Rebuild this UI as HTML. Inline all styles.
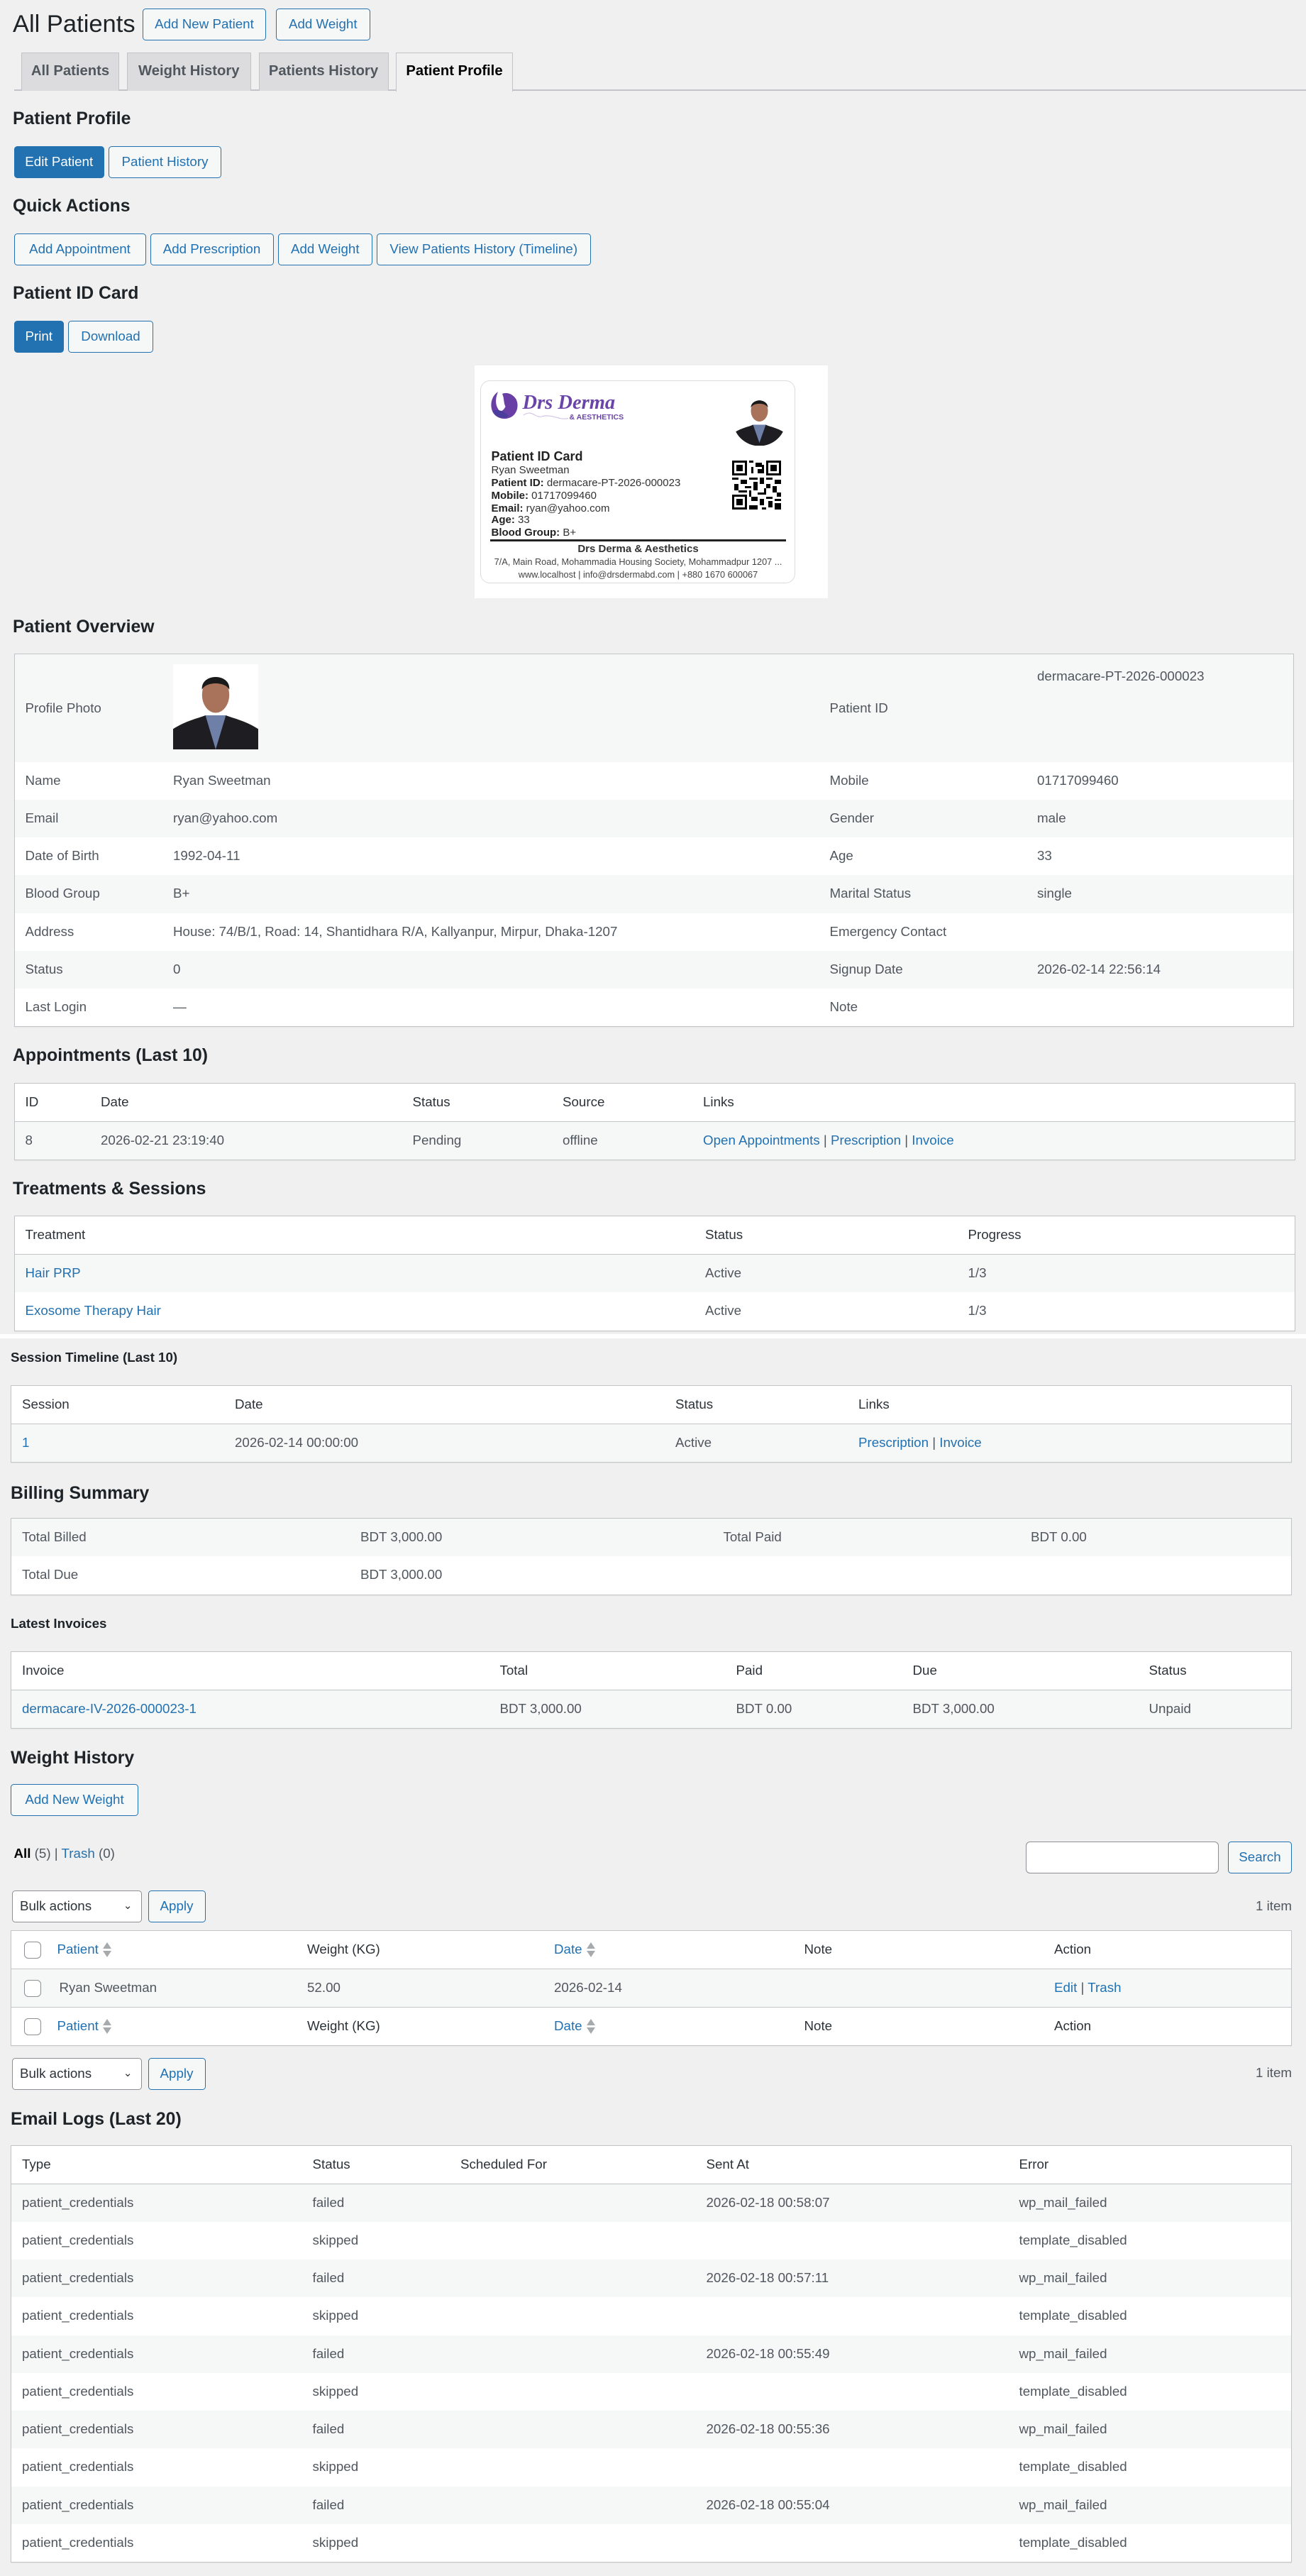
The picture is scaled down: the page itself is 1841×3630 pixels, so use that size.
<!DOCTYPE html>
<html><head><meta charset="utf-8">
<style>
*{box-sizing:border-box;margin:0;padding:0}
html,body{background:#f0f0f1}
body{zoom:1.5;width:1227px;height:2420px;overflow:hidden;font-family:"Liberation Sans",Arial,sans-serif;font-size:12.5px;color:#3c434a}
#w{position:relative;width:1227px;height:2420px}
.a{position:absolute}
h1{position:absolute;font-size:23px;font-weight:400;color:#1d2327;left:12px;top:8px;line-height:30px}
.h2{position:absolute;left:12px;font-size:16.5px;font-weight:600;color:#1d2327;line-height:20px}
.h4{position:absolute;left:10px;font-size:12.5px;font-weight:600;color:#1d2327;line-height:16px}
.btn{position:absolute;height:30px;line-height:28px;border:1px solid #2271b1;color:#2271b1;background:#f6f7f7;border-radius:3px;font-size:12.5px;text-align:center;white-space:nowrap}
.btn.p{background:#2271b1;color:#fff}
.tab{position:absolute;top:49px;height:36px;line-height:34px;background:#dcdcde;border:1px solid #c3c4c7;border-bottom:none;font-size:13.5px;font-weight:600;color:#50575e;text-align:center}
.tab.on{background:#f0f0f1;color:#000;height:37px}
.t{position:absolute;border:1px solid #c3c4c7;background:#fff;box-shadow:0 1px 1px rgba(0,0,0,.04)}
.r{position:relative;height:35.5px;color:#50575e}
.r.h{height:36px;border-bottom:1px solid #c3c4c7;color:#2c3338}
.r.s{background:#f6f7f7}
.r span{position:absolute;top:0;line-height:35px;white-space:nowrap}
.lk{color:#2271b1}
.cb{position:absolute;top:10px;width:16px;height:16px;border:1px solid #8c8f94;border-radius:4px;background:#fff}
.so{display:inline-block;vertical-align:middle;margin-left:4px;width:8px;height:16px;position:relative}
.so:before{content:"";position:absolute;left:0;top:1px;border-left:4px solid transparent;border-right:4px solid transparent;border-bottom:6px solid #a7aaad}
.so:after{content:"";position:absolute;left:0;top:9px;border-left:4px solid transparent;border-right:4px solid transparent;border-top:6px solid #a7aaad}
.sel{position:absolute;height:30px;border:1px solid #8c8f94;border-radius:3px;background:#fff;line-height:28px;padding-left:7px;color:#2c3338}
.card{position:absolute;left:451px;top:357px;width:296px;height:191px;border:1px solid #dcdcde;border-radius:9px;background:#fff}
.cl{position:absolute;left:10px;font-size:10px;line-height:12px;color:#333;white-space:nowrap}
.cl b{font-weight:700;color:#222}
</style></head><body><div id="w">

<h1>All Patients</h1>
<div class="btn" style="left:134px;top:8px;width:116px">Add New Patient</div>
<div class="btn" style="left:259px;top:8px;width:89px">Add Weight</div>

<div class="a" style="left:13px;top:84px;width:1214px;height:1px;background:#c3c4c7"></div>
<div class="tab" style="left:20px;width:92px">All Patients</div>
<div class="tab" style="left:119px;width:117px">Weight History</div>
<div class="tab" style="left:243px;width:122px">Patients History</div>
<div class="tab on" style="left:372px;width:110px">Patient Profile</div>

<div class="h2" style="top:102px">Patient Profile</div>
<div class="btn p" style="left:13px;top:137px;width:85px">Edit Patient</div>
<div class="btn" style="left:102px;top:137px;width:106px">Patient History</div>

<div class="h2" style="top:184px">Quick Actions</div>
<div class="btn" style="left:13px;top:219px;width:124px">Add Appointment</div>
<div class="btn" style="left:141px;top:219px;width:116px">Add Prescription</div>
<div class="btn" style="left:261px;top:219px;width:89px">Add Weight</div>
<div class="btn" style="left:354px;top:219px;width:201px">View Patients History (Timeline)</div>

<div class="h2" style="top:266px">Patient ID Card</div>
<div class="btn p" style="left:13px;top:301px;width:47px">Print</div>
<div class="btn" style="left:64px;top:301px;width:80px">Download</div>

<div class="a" style="left:446px;top:343px;width:332px;height:219px;background:#fff"></div>
<div class="card">
  <svg class="a" style="left:8px;top:6px" width="135" height="32" viewBox="0 0 135 32">
    <path d="M8 4 C2 8 0 16 3 23 C6 29 14 31 20 28 C26 25 28 17 25 11 C22 6 16 4 12 6 C14 10 13 14 15 18 C13 22 10 24 8 20 C5 15 6 9 8 4Z" fill="#6a3fa5"/>
    <path d="M3 22 C8 20 14 22 18 27 C12 30 6 28 3 22Z" fill="#4b3d9c"/>
    <text x="31" y="20" font-family="Liberation Serif,serif" font-style="italic" font-weight="700" font-size="19" fill="#6a45a8">Drs Derma</text>
    <text x="75" y="30" font-family="Liberation Sans,sans-serif" font-weight="700" font-size="7" fill="#6a45a8">&amp; AESTHETICS</text>
    <path d="M32 26 C40 20 44 30 50 27 C60 25 65 31 74 29" stroke="#c9b8e6" stroke-width=".6" fill="none"/>
  </svg>
  <svg class="a" style="left:237px;top:8px" width="50" height="53" viewBox="0 0 50 53">
    <defs><clipPath id="c1"><circle cx="25" cy="28" r="25"/></clipPath></defs>
    <g clip-path="url(#c1)"><rect width="50" height="53" fill="#fff"/>
    <path d="M0 53 L2 40 C8 36 15 35 19 33 L31 33 C35 35 42 36 48 40 L50 53Z" fill="#1e1e22"/>
    <path d="M19 33 L25 50 L31 33Z" fill="#6e7fa8"/>
    <ellipse cx="25" cy="20" rx="8" ry="10" fill="#a8735a"/>
    <path d="M17 17 C17 8 33 8 33 17 C31 12 19 12 17 17Z" fill="#1a1a1a"/></g>
  </svg>
  <div class="cl" style="top:64px;font-size:12px;font-weight:700;color:#222;line-height:14px">Patient ID Card</div>
  <div class="cl" style="top:78px">Ryan Sweetman</div>
  <div class="cl" style="top:90px"><b>Patient ID:</b> dermacare-PT-2026-000023</div>
  <div class="cl" style="top:102px"><b>Mobile:</b> 01717099460</div>
  <div class="cl" style="top:114px"><b>Email:</b> ryan@yahoo.com</div>
  <div class="cl" style="top:125px"><b>Age:</b> 33</div>
  <div class="cl" style="top:137px"><b>Blood Group:</b> B+</div>
  <svg class="a" style="left:236px;top:75px" width="46" height="46" viewBox="0 0 23 23" shape-rendering="crispEdges">
    <rect width="23" height="23" fill="#fff"/>
    <g fill="#000">
    <rect x="0" y="0" width="7" height="7"/><rect x="16" y="0" width="7" height="7"/><rect x="0" y="16" width="7" height="7"/>
    </g><g fill="#fff"><rect x="1" y="1" width="5" height="5"/><rect x="17" y="1" width="5" height="5"/><rect x="1" y="17" width="5" height="5"/></g>
    <g fill="#000"><rect x="2" y="2" width="3" height="3"/><rect x="18" y="2" width="3" height="3"/><rect x="2" y="18" width="3" height="3"/>
    <rect x="8" y="0" width="2" height="1"/><rect x="11" y="1" width="3" height="2"/><rect x="9" y="3" width="1" height="3"/><rect x="12" y="4" width="2" height="2"/><rect x="14" y="2" width="1" height="4"/>
    <rect x="0" y="8" width="3" height="1"/><rect x="4" y="9" width="3" height="2"/><rect x="8" y="8" width="4" height="1"/><rect x="13" y="8" width="2" height="3"/><rect x="16" y="8" width="3" height="1"/><rect x="20" y="9" width="3" height="2"/>
    <rect x="1" y="11" width="2" height="3"/><rect x="6" y="12" width="3" height="1"/><rect x="10" y="10" width="2" height="4"/><rect x="16" y="11" width="2" height="2"/><rect x="19" y="12" width="2" height="3"/>
    <rect x="3" y="14" width="4" height="1"/><rect x="8" y="14" width="1" height="3"/><rect x="12" y="15" width="3" height="1"/><rect x="15" y="13" width="1" height="3"/><rect x="21" y="15" width="2" height="2"/>
    <rect x="9" y="17" width="3" height="2"/><rect x="13" y="18" width="2" height="3"/><rect x="16" y="17" width="3" height="1"/><rect x="17" y="19" width="2" height="3"/><rect x="20" y="18" width="3" height="1"/>
    <rect x="8" y="21" width="4" height="2"/><rect x="14" y="22" width="2" height="1"/><rect x="20" y="20" width="3" height="3"/></g>
  </svg>
  <div class="a" style="left:9px;top:149px;width:278px;height:2px;background:#222"></div>
  <div class="a" style="left:0;top:152px;width:296px;text-align:center;font-size:10px;font-weight:700;color:#333;line-height:12px">Drs Derma &amp; Aesthetics</div>
  <div class="a" style="left:0;top:164px;width:296px;text-align:center;font-size:8.5px;color:#444;line-height:12px;white-space:nowrap">7/A, Main Road, Mohammadia Housing Society, Mohammadpur 1207 ...</div>
  <div class="a" style="left:0;top:176px;width:296px;text-align:center;font-size:8.5px;color:#444;line-height:12px">www.localhost | info@drsdermabd.com | +880 1670 600067</div>
</div>

<div class="h2" style="top:579px">Patient Overview</div>
<div class="t" style="left:13px;top:614px;width:1203px">
  <div class="r s" style="height:101px"><span style="left:10px;line-height:101px">Profile Photo</span>
    <svg class="a" style="left:149px;top:9px" width="80" height="80" viewBox="0 0 50 50">
      <rect width="50" height="50" fill="#fff"/>
      <path d="M0 50 L0 38 C8 33 14 32 19 30 L31 30 C36 32 42 33 50 38 L50 50Z" fill="#1e1e22"/>
      <path d="M19 30 L25 50 L31 30Z" fill="#6e7fa8"/>
      <ellipse cx="25" cy="18" rx="8" ry="10.5" fill="#a8735a"/>
      <path d="M17 15 C16 5 34 5 33 15 C31 10 19 10 17 15Z" fill="#1a1a1a"/>
    </svg>
    <span style="left:766px;line-height:101px">Patient ID</span><span style="left:961px;top:3px">dermacare-PT-2026-000023</span></div>
  <div class="r"><span style="left:10px">Name</span><span style="left:149px">Ryan Sweetman</span><span style="left:766px">Mobile</span><span style="left:961px">01717099460</span></div>
  <div class="r s"><span style="left:10px">Email</span><span style="left:149px">ryan@yahoo.com</span><span style="left:766px">Gender</span><span style="left:961px">male</span></div>
  <div class="r"><span style="left:10px">Date of Birth</span><span style="left:149px">1992-04-11</span><span style="left:766px">Age</span><span style="left:961px">33</span></div>
  <div class="r s"><span style="left:10px">Blood Group</span><span style="left:149px">B+</span><span style="left:766px">Marital Status</span><span style="left:961px">single</span></div>
  <div class="r"><span style="left:10px">Address</span><span style="left:149px">House: 74/B/1, Road: 14, Shantidhara R/A, Kallyanpur, Mirpur, Dhaka-1207</span><span style="left:766px">Emergency Contact</span></div>
  <div class="r s"><span style="left:10px">Status</span><span style="left:149px">0</span><span style="left:766px">Signup Date</span><span style="left:961px">2026-02-14 22:56:14</span></div>
  <div class="r"><span style="left:10px">Last Login</span><span style="left:149px">—</span><span style="left:766px">Note</span></div>
</div>

<div class="h2" style="top:982px">Appointments (Last 10)</div>
<div class="t" style="left:13px;top:1017px;width:1204px">
  <div class="r h"><span style="left:10px">ID</span><span style="left:81px">Date</span><span style="left:374px">Status</span><span style="left:515px">Source</span><span style="left:647px">Links</span></div>
  <div class="r s"><span style="left:10px">8</span><span style="left:81px">2026-02-21 23:19:40</span><span style="left:374px">Pending</span><span style="left:515px">offline</span><span style="left:647px"><span class="lk" style="position:static">Open Appointments</span> | <span class="lk" style="position:static">Prescription</span> | <span class="lk" style="position:static">Invoice</span></span></div>
</div>

<div class="h2" style="top:1107px">Treatments &amp; Sessions</div>
<div class="t" style="left:13px;top:1142px;width:1204px">
  <div class="r h"><span style="left:10px">Treatment</span><span style="left:649px">Status</span><span style="left:896px">Progress</span></div>
  <div class="r s"><span style="left:10px" class="lk">Hair PRP</span><span style="left:649px">Active</span><span style="left:896px">1/3</span></div>
  <div class="r"><span style="left:10px" class="lk">Exosome Therapy Hair</span><span style="left:649px">Active</span><span style="left:896px">1/3</span></div>
</div>
<div class="a" style="left:0;top:1253px;width:1227px;height:4px;background:#fff"></div>

<div class="h4" style="top:1267px">Session Timeline (Last 10)</div>
<div class="t" style="left:10px;top:1301px;width:1204px">
  <div class="r h"><span style="left:10px">Session</span><span style="left:210px">Date</span><span style="left:624px">Status</span><span style="left:796px">Links</span></div>
  <div class="r s"><span style="left:10px" class="lk">1</span><span style="left:210px">2026-02-14 00:00:00</span><span style="left:624px">Active</span><span style="left:796px"><span class="lk" style="position:static">Prescription</span> | <span class="lk" style="position:static">Invoice</span></span></div>
</div>

<div class="h2" style="top:1393px;left:10px">Billing Summary</div>
<div class="t" style="left:10px;top:1426px;width:1204px">
  <div class="r s"><span style="left:10px">Total Billed</span><span style="left:328px">BDT 3,000.00</span><span style="left:669px">Total Paid</span><span style="left:958px">BDT 0.00</span></div>
  <div class="r"><span style="left:10px">Total Due</span><span style="left:328px">BDT 3,000.00</span></div>
</div>

<div class="h4" style="top:1517px">Latest Invoices</div>
<div class="t" style="left:10px;top:1551px;width:1204px">
  <div class="r h"><span style="left:10px">Invoice</span><span style="left:459px">Total</span><span style="left:681px">Paid</span><span style="left:847px">Due</span><span style="left:1069px">Status</span></div>
  <div class="r s"><span style="left:10px" class="lk">dermacare-IV-2026-000023-1</span><span style="left:459px">BDT 3,000.00</span><span style="left:681px">BDT 0.00</span><span style="left:847px">BDT 3,000.00</span><span style="left:1069px">Unpaid</span></div>
</div>

<div class="h2" style="top:1642px;left:10px">Weight History</div>
<div class="btn" style="left:10px;top:1676px;width:120px">Add New Weight</div>
<div class="a" style="left:13px;top:1733px;line-height:16px;color:#50575e"><b style="color:#000;font-weight:600">All</b> (5) | <span class="lk">Trash</span> (0)</div>
<div class="a" style="left:964px;top:1730px;width:181px;height:30px;border:1px solid #8c8f94;border-radius:4px;background:#fff"></div>
<div class="btn" style="left:1154px;top:1730px;width:60px">Search</div>
<div class="sel" style="left:11px;top:1776px;width:122px">Bulk actions<span style="position:absolute;right:8px;top:0;font-size:10px">&#8964;</span></div>
<div class="btn" style="left:139px;top:1776px;width:54px">Apply</div>
<div class="a" style="left:1170px;top:1783px;width:44px;text-align:right;color:#50575e">1 item</div>
<div class="t" style="left:10px;top:1813px;width:1204px">
  <div class="r h"><div class="cb" style="left:12px"></div><span style="left:43px" class="lk">Patient<i class="so"></i></span><span style="left:278px">Weight (KG)</span><span style="left:510px" class="lk">Date<i class="so"></i></span><span style="left:745px">Note</span><span style="left:980px">Action</span></div>
  <div class="r s" style="border-bottom:1px solid #c3c4c7;height:36px"><div class="cb" style="left:12px"></div><span style="left:45px">Ryan Sweetman</span><span style="left:278px">52.00</span><span style="left:510px">2026-02-14</span><span style="left:980px"><span class="lk" style="position:static">Edit</span> | <span class="lk" style="position:static">Trash</span></span></div>
  <div class="r" style="color:#2c3338"><div class="cb" style="left:12px"></div><span style="left:43px" class="lk">Patient<i class="so"></i></span><span style="left:278px">Weight (KG)</span><span style="left:510px" class="lk">Date<i class="so"></i></span><span style="left:745px">Note</span><span style="left:980px">Action</span></div>
</div>
<div class="sel" style="left:11px;top:1933px;width:122px">Bulk actions<span style="position:absolute;right:8px;top:0;font-size:10px">&#8964;</span></div>
<div class="btn" style="left:139px;top:1933px;width:54px">Apply</div>
<div class="a" style="left:1170px;top:1940px;width:44px;text-align:right;color:#50575e">1 item</div>

<div class="h2" style="top:1981px;left:10px">Email Logs (Last 20)</div>
<div class="t" style="left:10px;top:2015px;width:1204px">
  <div class="r h"><span style="left:10px">Type</span><span style="left:283px">Status</span><span style="left:422px">Scheduled For</span><span style="left:653px">Sent At</span><span style="left:947px">Error</span></div>
  <div class="r s"><span style="left:10px">patient_credentials</span><span style="left:283px">failed</span><span style="left:653px">2026-02-18 00:58:07</span><span style="left:947px">wp_mail_failed</span></div>
  <div class="r"><span style="left:10px">patient_credentials</span><span style="left:283px">skipped</span><span style="left:947px">template_disabled</span></div>
  <div class="r s"><span style="left:10px">patient_credentials</span><span style="left:283px">failed</span><span style="left:653px">2026-02-18 00:57:11</span><span style="left:947px">wp_mail_failed</span></div>
  <div class="r"><span style="left:10px">patient_credentials</span><span style="left:283px">skipped</span><span style="left:947px">template_disabled</span></div>
  <div class="r s"><span style="left:10px">patient_credentials</span><span style="left:283px">failed</span><span style="left:653px">2026-02-18 00:55:49</span><span style="left:947px">wp_mail_failed</span></div>
  <div class="r"><span style="left:10px">patient_credentials</span><span style="left:283px">skipped</span><span style="left:947px">template_disabled</span></div>
  <div class="r s"><span style="left:10px">patient_credentials</span><span style="left:283px">failed</span><span style="left:653px">2026-02-18 00:55:36</span><span style="left:947px">wp_mail_failed</span></div>
  <div class="r"><span style="left:10px">patient_credentials</span><span style="left:283px">skipped</span><span style="left:947px">template_disabled</span></div>
  <div class="r s"><span style="left:10px">patient_credentials</span><span style="left:283px">failed</span><span style="left:653px">2026-02-18 00:55:04</span><span style="left:947px">wp_mail_failed</span></div>
  <div class="r"><span style="left:10px">patient_credentials</span><span style="left:283px">skipped</span><span style="left:947px">template_disabled</span></div>
</div>

</div></body></html>
